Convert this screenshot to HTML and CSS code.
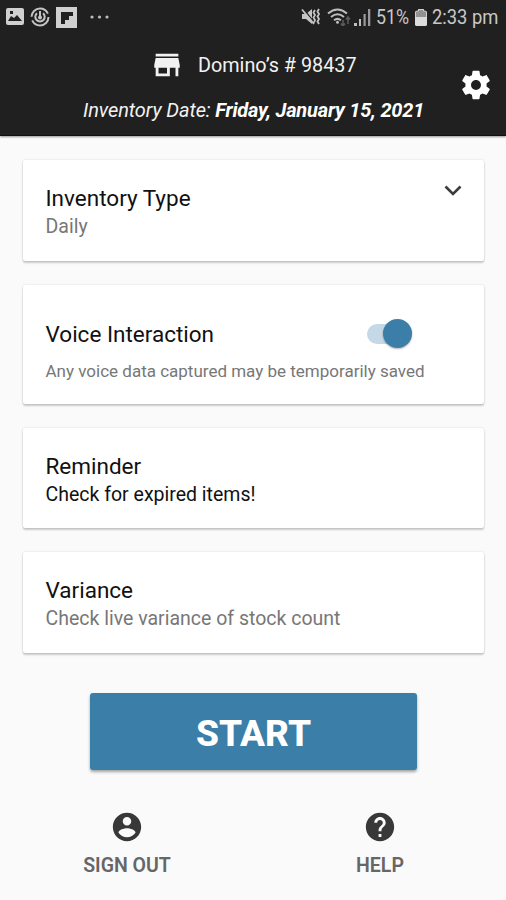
FILE: index.html
```html
<!DOCTYPE html>
<html lang="en">
<head>
<meta charset="utf-8">
<title>Inventory</title>
<link rel="stylesheet" href="styles.css">
</head>
<body>
<header class="header">
  <div class="status">
    <div class="status-left">
      <svg width="18" height="18" viewBox="0 0 18 18"><path fill="#d0d0d0" fill-rule="evenodd" d="M2 0h14a2 2 0 0 1 2 2v13a2 2 0 0 1-2 2H2a2 2 0 0 1-2-2V2a2 2 0 0 1 2-2zM2 13h14L11 7 8 10 5 8zM4 3v3h3V3z"/></svg>
      <svg width="20" height="20" viewBox="0 0 20 20" fill="none" stroke="#c4c4c4" stroke-width="2"><circle cx="10" cy="10" r="8.5" stroke-dasharray="23 3.7"/><path d="M7 6.2a4.700 4.700 0 1 0 6 0M10 4v6"/><circle cx="10" cy="10.5" r="1"/></svg>
      <svg width="21" height="21" viewBox="0 0 21 21"><path fill="#d0d0d0" d="M0 0h21v21H0z"/><path fill="#202020" d="M5 5h12v4h-4v4H9v4H5z"/></svg>
      <svg class="dots" width="19" height="4" viewBox="0 0 19 4" fill="#bdbdbd"><circle cx="2" cy="2" r="1.6"/><circle cx="9.5" cy="2" r="1.6"/><circle cx="17" cy="2" r="1.6"/></svg>
    </div>
    <div class="status-right">
      <svg width="20" height="18" viewBox="0 0 20 18" fill="none" stroke="#c4c4c4" stroke-width="1.8"><path fill="#c4c4c4" stroke="none" d="M1 6h4l6-5v15l-6-5H1z"/><path stroke="#202020" stroke-width="1.2" d="M2.5 1 13 14"/><path d="M1 1.500 13 16M14 2l-1.500 2.500L14 7l-1.500 2.500L14 12l-1 2.500M18 1l-1.500 2.500L18 6l-1.500 2.500L18 11l-1.500 2.500L18 16"/></svg>
      <svg class="wifi" width="24" height="18" viewBox="0 0 24 18" fill="none" stroke="#bdbdbd" stroke-width="2"><path d="M1 5.500Q10.500-2.500 20 5.500M4 9Q10.500 3.500 17 9M7 12.200Q10.500 9.500 14 12.200"/><circle cx="10.500" cy="14.300" r="1.500" fill="#bdbdbd" stroke="none"/><path stroke="#5c5c5c" stroke-width="1.500" d="M16 12v6M13.800 15.500 16 18l2-2.500M21 16V9M19 11.500 21 9l2 2.500"/></svg>
      <svg class="signal" width="17" height="18" viewBox="0 0 17 18" fill="#bdbdbd"><path d="M0 15h3v3H0zM5 11h2v7H5z"/><path fill="#999" d="M9.500 6h2.200v12H9.500zM14 1h2.300v17H14z"/></svg>
      <span class="st battery-text"><span>51%</span></span>
      <svg class="battery" width="12" height="17" viewBox="0 0 12 17"><path fill="#929292" d="M3 0h6v2h2l1 1v6H0V3l1-1h2z"/><path fill="#dcdcdc" d="M0 8h12v8l-1 1H1l-1-1z"/><path fill="none" stroke="#d0d0d0" d="M.5 8V3l1-1h2V.5h5V2h2l1 1v5"/></svg>
      <span class="st time"><span>2:33 pm</span></span>
    </div>
  </div>
  <div class="title-row">
    <svg width="34" height="34" viewBox="0 0 24 24" fill="#f2f2f2"><path d="M20 4H4v2h16V4zm1 10v-2l-1-5H4l-1 5v2h1v6h10v-6h4v6h2v-6h1zm-9 4H6v-4h6v4z"/></svg>
    <span class="store">Domino’s # 98437</span>
  </div>
  <div class="date"><span>Inventory Date: </span><b>Friday, January 15, 2021</b></div>
  <svg class="gear" width="34" height="34" viewBox="0 0 24 24" fill="#fff"><path d="M19.430 12.980c.04-.32.07-.64.07-.98s-.03-.66-.07-.98l2.110-1.650c.19-.15.24-.42.12-.64l-2-3.460c-.12-.22-.39-.3-.61-.22l-2.490 1c-.52-.4-1.080-.73-1.690-.98l-.38-2.650C14.460 2.180 14.250 2 14 2h-4c-.25 0-.46.18-.49.42l-.38 2.650c-.61.25-1.170.59-1.690.98l-2.490-1c-.23-.09-.49 0-.61.22l-2 3.460c-.13.22-.07.49.12.64l2.110 1.650c-.04.32-.07.65-.07.98s.03.66.07.98l-2.110 1.650c-.19.15-.24.42-.12.64l2 3.460c.12.22.39.3.61.22l2.490-1c.52.4 1.080.73 1.690.98l.38 2.650c.03.24.24.42.49.42h4c.25 0 .46-.18.49-.42l.38-2.650c.61-.25 1.170-.59 1.690-.98l2.490 1c.23.09.49 0 .61-.22l2-3.460c.12-.22.07-.49-.12-.64l-2.110-1.650zM12 15.500c-1.930 0-3.500-1.570-3.500-3.500s1.570-3.500 3.500-3.500 3.500 1.570 3.500 3.500-1.570 3.500-3.500 3.500z"/></svg>
</header>
<main class="cards">
  <section class="card type">
    <div><h2>Inventory Type</h2><p>Daily</p></div>
    <svg class="chevron" width="18" height="11" viewBox="0 0 18 11"><path d="M1.500 1.500 9 9l7.500-7.500" fill="none" stroke="#3c3c3c" stroke-width="2.600"/></svg>
  </section>
  <section class="card voice">
    <div class="voice-row"><h2>Voice Interaction</h2><div class="switch"><i class="knob"></i></div></div>
    <p class="small">Any voice data captured may be temporarily saved</p>
  </section>
  <section class="card"><div><h2>Reminder</h2><p class="dark">Check for expired items!</p></div></section>
  <section class="card variance"><div><h2>Variance</h2><p>Check live variance of stock count</p></div></section>
</main>
<button class="start">START</button>
<footer class="footer">
  <div class="action">
    <svg width="34" height="34" viewBox="0 0 24 24" fill="#383838"><path d="M12 2C6.480 2 2 6.480 2 12s4.480 10 10 10 10-4.480 10-10S17.520 2 12 2zm0 3c1.660 0 3 1.340 3 3s-1.340 3-3 3-3-1.340-3-3 1.340-3 3-3zm0 14.200c-2.500 0-4.710-1.280-6-3.220.03-1.990 4-3.080 6-3.080 1.990 0 5.970 1.090 6 3.080-1.290 1.940-3.500 3.220-6 3.220z"/></svg>
    <span>SIGN OUT</span>
  </div>
  <div class="action">
    <svg width="34" height="34" viewBox="0 0 24 24" fill="#383838"><path d="M12 2C6.480 2 2 6.480 2 12s4.480 10 10 10 10-4.480 10-10S17.520 2 12 2zm1 17h-2v-2h2v2zm2.070-7.750l-.9.920C13.450 12.900 13 13.500 13 15h-2v-.5c0-1.100.45-2.100 1.170-2.830l1.240-1.260c.37-.36.590-.86.590-1.410 0-1.100-.9-2-2-2s-2 .9-2 2H8c0-2.210 1.790-4 4-4s4 1.790 4 4c0 .88-.36 1.680-.93 2.250z"/></svg>
    <span>HELP</span>
  </div>
</footer>
</body>
</html>
```
FILE: styles.css
```css
* { box-sizing: border-box; }
body { margin: 0; width: 506px; height: 900px; overflow: hidden; background: #fafafa; font-family: Roboto, "Liberation Sans", sans-serif; color: #111; }
svg { display: block; flex: none; }
h2, p { margin: 0; font-weight: 400; white-space: nowrap; }
.header { position: relative; height: 136px; background: #202020; color: #f2f2f2; border-bottom: 1px solid #111; box-shadow: 0 1px 2px rgba(0,0,0,.4); }
.status { height: 34px; display: flex; justify-content: space-between; padding: 0 8px 0 6px; }
.status-left, .status-right { display: flex; align-items: center; }
.status-left svg + svg { margin-left: 6px; }
.status-left .dots { margin-left: 13px; }
.status-right .wifi { margin-left: 6px; }
.status-right .signal { margin-left: 3px; }
.st { color: #c8c8c8; font-size: 21px; line-height: 34px; white-space: nowrap; }
.st span { display: inline-block; transform-origin: 0 50%; }
.battery-text { width: 34px; margin-left: 5px; }
.battery-text span { transform: scaleX(.85); }
.battery { margin-left: 5px; }
.time { width: 66px; margin-left: 5px; }
.time span { transform: scaleX(.875); }
.title-row { display: flex; align-items: center; height: 34px; margin-top: 14px; padding-left: 150px; }
.store { margin-left: 14px; padding-top: 2px; font-size: 19.8px; line-height: 34px; white-space: nowrap; }
.date { margin: 13px 0 0 83px; font-size: 20px; line-height: 30px; font-style: italic; white-space: nowrap; letter-spacing: -.1px; }
.date b { color: #fff; letter-spacing: -.2px; }
.gear { position: absolute; left: 459px; top: 68px; }
.cards { padding: 24px 22px 0 23px; display: flex; flex-direction: column; gap: 24px; }
.card { height: 100px; padding: 24px 22px 0 22.5px; background: #fff; border-radius: 2px; box-shadow: 0 2px 2px rgba(0,0,0,.19), 0 0 2px rgba(0,0,0,.16); }
.card.type { height: 101px; display: flex; justify-content: space-between; }
.card.variance { height: 101px; }
.chevron { margin-top: 1px; }
.card h2 { font-size: 22.5px; line-height: 28px; }
.card p { font-size: 19.5px; line-height: 28px; color: #777; margin-top: 1px; }
.card .dark { color: #111; }
.card.voice { height: 119px; padding-top: 32px; }
.voice-row { display: flex; justify-content: space-between; align-items: center; height: 34px; }
.switch { position: relative; width: 45px; height: 20px; margin-right: 50px; border-radius: 10px; background: #c5d8e6; }
.knob { position: absolute; right: 0; top: -5px; width: 29px; height: 29px; border-radius: 50%; background: #3b7ea8; box-shadow: 0 1px 2px rgba(0,0,0,.3); }
.card .small { font-size: 17px; line-height: 24px; margin-top: 8px; }
.start { display: block; width: 327px; height: 77px; margin: 40px 0 0 90px; padding: 5px 0 0; border: 0; border-radius: 3px; background: #3b7fa8; box-shadow: 0 2px 3px rgba(0,0,0,.35); color: #fff; font: 800 37px/72px Roboto, sans-serif; }
.footer { display: flex; justify-content: space-between; padding: 40px 26px 0 27px; }
.action { width: 200px; display: flex; flex-direction: column; align-items: center; font-size: 19.5px; line-height: 28px; font-weight: 600; color: #666; }
.action span { margin-top: 8px; }
```
